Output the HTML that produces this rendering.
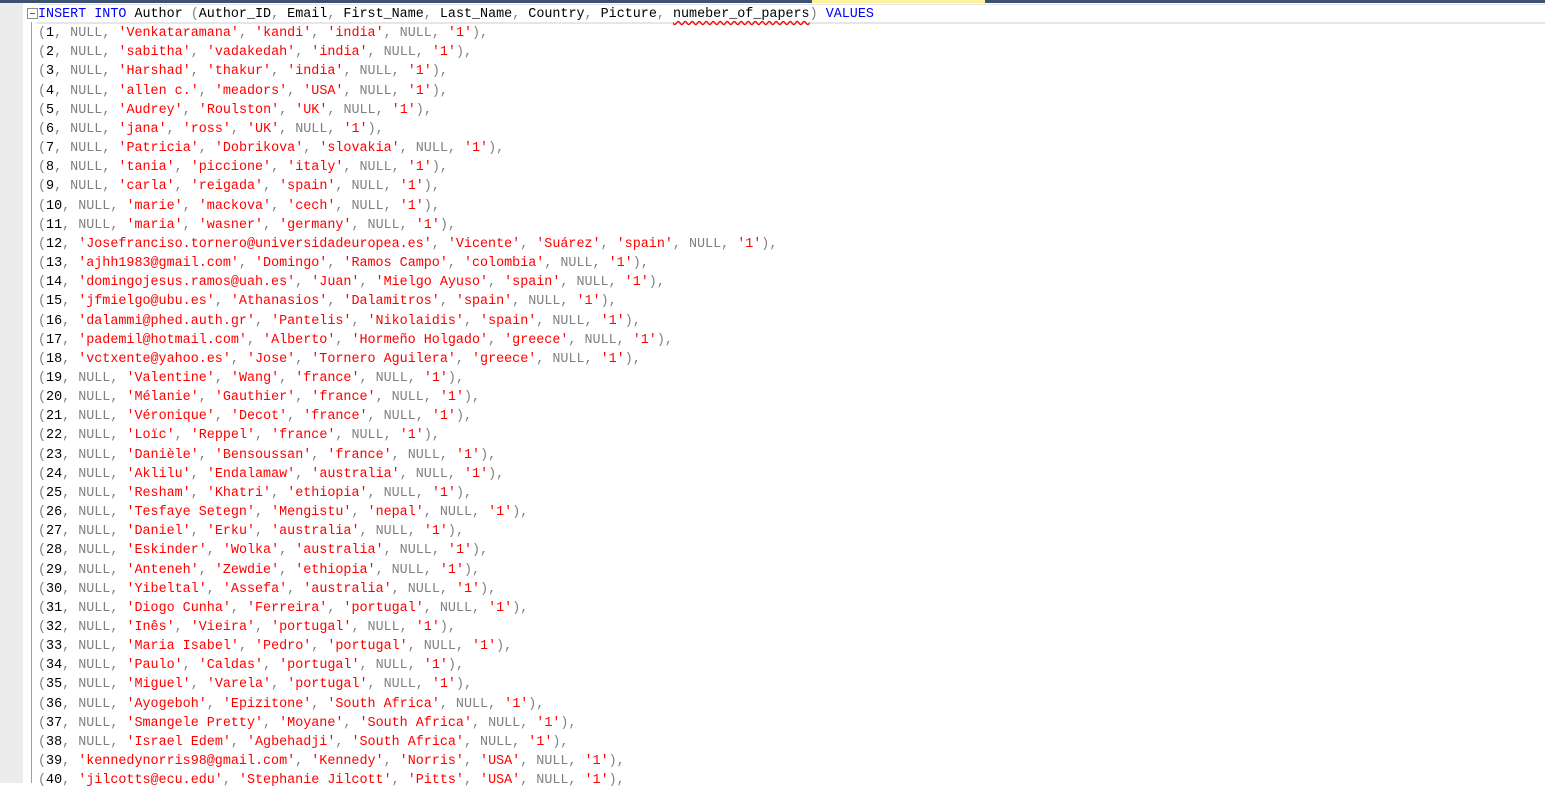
<!DOCTYPE html>
<html><head><meta charset="utf-8"><style>
html,body{margin:0;padding:0;width:1545px;height:783px;overflow:hidden;background:#fff}
.top{position:absolute;left:0;top:0;width:1545px;height:3px;background:#3d5272}
.top .y{position:absolute;left:812px;width:173px;top:0;height:3px;background:#fff29d}
.gut{position:absolute;left:0;top:3px;width:23px;height:780px;background:#ececec}
.fold{position:absolute;left:31px;top:22px;width:1px;height:761px;background:#a0a0a0}
.box{position:absolute;left:27px;top:8px;width:9px;height:9px;border:1px solid #909090;background:#fff}
.box:after{content:"";position:absolute;left:2px;top:4px;width:5px;height:1px;background:#606060}
.cur{position:absolute;left:37px;top:4px;width:1508px;height:17px;border-top:1px solid #e6e6e6;border-bottom:2px solid #e6e6e6}
pre{position:absolute;left:38px;top:5px;margin:0;font-family:"Liberation Mono",monospace;font-size:13.4px;line-height:19.15px;color:#000}
.k{color:#0000ff}.g{color:#808080}.s{color:#ff0000}
.u{text-decoration:underline wavy #ff0000;text-underline-offset:3px}
</style></head><body>
<div class="top"><div class="y"></div></div>
<div class="gut"></div>
<div class="cur"></div>
<div class="box"></div>
<div class="fold"></div>
<pre id="p"><span class="k">INSERT INTO</span> Author <span class="g">(</span>Author_ID<span class="g">,</span> Email<span class="g">,</span> First_Name<span class="g">,</span> Last_Name<span class="g">,</span> Country<span class="g">,</span> Picture<span class="g">,</span> <span class="u">numeber_of_papers</span><span class="g">)</span> <span class="k">VALUES</span>
</pre>
<script>
var rows=[
[1,0,'Venkataramana','kandi','india'],[2,0,'sabitha','vadakedah','india'],[3,0,'Harshad','thakur','india'],[4,0,'allen c.','meadors','USA'],[5,0,'Audrey','Roulston','UK'],[6,0,'jana','ross','UK'],[7,0,'Patricia','Dobrikova','slovakia'],[8,0,'tania','piccione','italy'],[9,0,'carla','reigada','spain'],[10,0,'marie','mackova','cech'],[11,0,'maria','wasner','germany'],
[12,'Josefranciso.tornero@universidadeuropea.es','Vicente','Suárez','spain'],[13,'ajhh1983@gmail.com','Domingo','Ramos Campo','colombia'],[14,'domingojesus.ramos@uah.es','Juan','Mielgo Ayuso','spain'],[15,'jfmielgo@ubu.es','Athanasios','Dalamitros','spain'],[16,'dalammi@phed.auth.gr','Pantelis','Nikolaidis','spain'],[17,'pademil@hotmail.com','Alberto','Hormeño Holgado','greece'],[18,'vctxente@yahoo.es','Jose','Tornero Aguilera','greece'],
[19,0,'Valentine','Wang','france'],[20,0,'Mélanie','Gauthier','france'],[21,0,'Véronique','Decot','france'],[22,0,'Loïc','Reppel','france'],[23,0,'Danièle','Bensoussan','france'],[24,0,'Aklilu','Endalamaw','australia'],[25,0,'Resham','Khatri','ethiopia'],[26,0,'Tesfaye Setegn','Mengistu','nepal'],[27,0,'Daniel','Erku','australia'],[28,0,'Eskinder','Wolka','australia'],[29,0,'Anteneh','Zewdie','ethiopia'],[30,0,'Yibeltal','Assefa','australia'],[31,0,'Diogo Cunha','Ferreira','portugal'],[32,0,'Inês','Vieira','portugal'],[33,0,'Maria Isabel','Pedro','portugal'],[34,0,'Paulo','Caldas','portugal'],[35,0,'Miguel','Varela','portugal'],[36,0,'Ayogeboh','Epizitone','South Africa'],[37,0,'Smangele Pretty','Moyane','South Africa'],[38,0,'Israel Edem','Agbehadji','South Africa'],[39,'kennedynorris98@gmail.com','Kennedy','Norris','USA'],[40,'jilcotts@ecu.edu','Stephanie Jilcott','Pitts','USA']];
var G=function(t){return '<span class="g">'+t+'</span>'},S=function(t){return '<span class="s">\''+t+'\'</span>'};
var h='';rows.forEach(function(r){h+=G('(')+r[0]+G(', ')+(r[1]?S(r[1]):G('NULL'))+G(', ')+S(r[2])+G(', ')+S(r[3])+G(', ')+S(r[4])+G(', NULL, ')+S('1')+G('),')+'\n';});
document.getElementById('p').innerHTML+=h;
</script>
</body></html>
